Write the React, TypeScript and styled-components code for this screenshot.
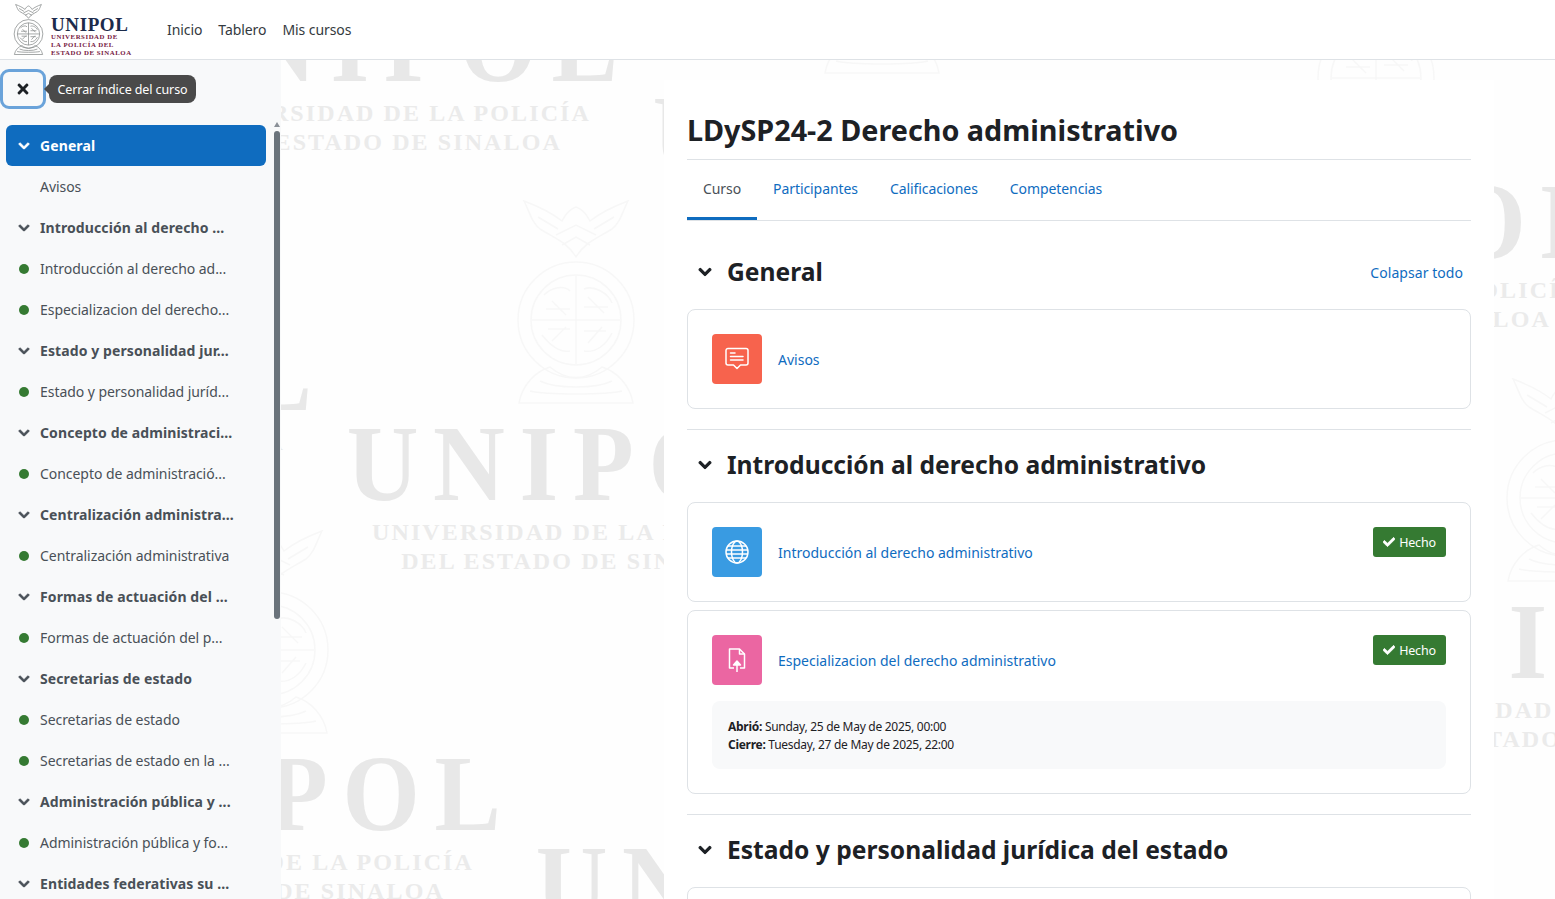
import React from "react";
import styled, { createGlobalStyle } from "styled-components";
import { FaCheck, FaChevronDown, FaTimes } from "react-icons/fa";

const GlobalStyle = createGlobalStyle`
  html, body {
    margin: 0;
    height: 100%;
    overflow: hidden;
    background: #fefefe;
  }
  body {
    font-family: "Noto Sans", "Open Sans", sans-serif;
    color: #1d2125;
  }
  * { box-sizing: border-box; }
`;

type IndexRow = { label: string; section?: boolean; done?: boolean; active?: boolean };

const indexRows: IndexRow[] = [
  { label: "General", section: true, active: true },
  { label: "Avisos" },
  { label: "Introducción al derecho ...", section: true },
  { label: "Introducción al derecho ad...", done: true },
  { label: "Especializacion del derecho...", done: true },
  { label: "Estado y personalidad jur...", section: true },
  { label: "Estado y personalidad juríd...", done: true },
  { label: "Concepto de administraci...", section: true },
  { label: "Concepto de administració...", done: true },
  { label: "Centralización administra...", section: true },
  { label: "Centralización administrativa", done: true },
  { label: "Formas de actuación del ...", section: true },
  { label: "Formas de actuación del p...", done: true },
  { label: "Secretarias de estado", section: true },
  { label: "Secretarias de estado", done: true },
  { label: "Secretarias de estado en la ...", done: true },
  { label: "Administración pública y ...", section: true },
  { label: "Administración pública y fo...", done: true },
  { label: "Entidades federativas su ...", section: true },
];

// where the repeated logo of the page background lands
const watermarks = [
  { x: 346, y: 428 },
  { x: 40, y: 758 },
  { x: 157, y: 9 },
  { x: -149, y: 338 },
  { x: 535, y: 848 },
  { x: 1146, y: 186 },
  { x: 1335, y: 606 },
  { x: 652, y: 98 },
];

const SealMark = ({ color, width, height, stroke }: { color: string; width: number; height: number; stroke: number }) => (
  <svg width={width} height={height} viewBox="0 0 120 210" fill="none" stroke={color} strokeWidth={stroke} style={{ display: "block" }}>
    <path d="M60 62C52 48 40 44 24 34C16 28 14 18 8 6C24 12 36 18 46 26C50 18 54 14 60 12C66 14 70 18 74 26C84 18 96 12 112 6C106 18 104 28 96 34C80 44 68 48 60 62Z" />
    <path d="M40 40L60 30L80 40M46 50L60 42L74 50M22 22L42 34M98 22L78 34" />
    <circle cx="60" cy="125" r="58" />
    <circle cx="60" cy="125" r="45" />
    <path d="M60 80V170M15 125H105" />
    <path d="M28 100C36 92 48 90 54 96M68 94C78 90 92 98 96 108M26 140C34 150 44 158 54 156M68 156C80 158 90 150 96 138M30 114H54M68 112H92M32 134H54M68 136H90M36 106L50 120M72 102L88 118M36 146L50 132M72 148L86 132" />
    <path d="M3 208C6 190 20 176 34 172C50 186 70 186 86 172C100 176 114 190 117 208Z" />
    <path d="M14 196C30 200 90 200 106 196M24 186C40 194 80 194 96 186" />
  </svg>
);

const ForumIcon = () => (
  <svg width="24" height="24" viewBox="0 0 24 24" fill="none" stroke="#fff" strokeWidth="1.5" strokeLinecap="round" strokeLinejoin="round">
    <path d="M3 1.5H21A2 2 0 0 1 23 3.500V16A2 2 0 0 1 21 18H15.500L12 21.500L8.500 18H3A2 2 0 0 1 1 16V3.500A2 2 0 0 1 3 1.500Z" />
    <path d="M5.500 6H10M5.500 9.500H18M5.500 13H18" />
  </svg>
);

const GlobeIcon = () => (
  <svg width="24" height="24" viewBox="0 0 24 24" fill="none" stroke="#fff" strokeWidth="1.500">
    <circle cx="12" cy="12" r="11" />
    <ellipse cx="12" cy="12" rx="5.500" ry="11" />
    <path d="M3 6H21M1.500 10H22.500M1.500 14H22.500M3 18H21" />
  </svg>
);

const UploadDocIcon = () => (
  <svg width="24" height="24" viewBox="0 0 24 24" fill="none" stroke="#fff" strokeWidth="1.500" strokeLinejoin="round">
    <path d="M9 20H4.500V1H14.500L19.500 6V20H15" />
    <path d="M14.500 1V6H19.500" />
    <path d="M12 24V14" />
    <path d="M8.500 17L12 13L15.500 17Z" fill="#fff" />
  </svg>
);

export default function App() {
  return (
    <Page>
      <GlobalStyle />
      <WatermarkLayer>
        {watermarks.map((w) => (
          <WatermarkLogo key={`${w.x}-${w.y}`} $x={w.x} $y={w.y}>
            <WatermarkSeal>
              <SealMark color="#f7f7f7" width={122} height={210} stroke={1.5} />
            </WatermarkSeal>
            <WatermarkName>UNIPOL</WatermarkName>
            <WatermarkLine>UNIVERSIDAD DE LA POLICÍA</WatermarkLine>
            <WatermarkLine>DEL ESTADO DE SINALOA</WatermarkLine>
          </WatermarkLogo>
        ))}
      </WatermarkLayer>

      <TopBar>
        <Brand>
          <SealMark color="#85898a" width={31} height={52} stroke={3} />
          <BrandText>
            <BrandName>UNIPOL</BrandName>
            <BrandLine>UNIVERSIDAD DE</BrandLine>
            <BrandLine>LA POLICÍA DEL</BrandLine>
            <BrandLine>ESTADO DE SINALOA</BrandLine>
          </BrandText>
        </Brand>
        <NavItem>Inicio</NavItem>
        <NavItem>Tablero</NavItem>
        <NavItem>Mis cursos</NavItem>
      </TopBar>

      <Body>
        <Sidebar>
          <SidebarTop>
            <CloseButton aria-label="Cerrar índice del curso">
              <FaTimes size={16} />
            </CloseButton>
            <Tooltip>Cerrar índice del curso</Tooltip>
          </SidebarTop>
          <CourseIndex>
            {indexRows.map((row, i) => (
              <IndexItem key={i} $section={row.section} $active={row.active}>
                <IndexSlot>
                  {row.section && <Chevron size={12} />}
                  {row.done && <DoneDot />}
                </IndexSlot>
                {row.label}
              </IndexItem>
            ))}
          </CourseIndex>
          <ScrollArrow />
          <ScrollThumb />
        </Sidebar>

        <Main>
          <Panel>
            <CourseTitle>LDySP24-2 Derecho administrativo</CourseTitle>
            <Tabs>
              <Tab $active>Curso</Tab>
              <Tab>Participantes</Tab>
              <Tab>Calificaciones</Tab>
              <Tab>Competencias</Tab>
            </Tabs>

            <Section $first>
              <SectionHead>
                <Chevron size={14} />
                <SectionTitle>General</SectionTitle>
                <CollapseAll>Colapsar todo</CollapseAll>
              </SectionHead>
              <Card>
                <ActivityRow>
                  <ActivityIcon $bg="#f7634d"><ForumIcon /></ActivityIcon>
                  <ActivityLink>Avisos</ActivityLink>
                </ActivityRow>
              </Card>
            </Section>

            <Section>
              <SectionHead>
                <Chevron size={14} />
                <SectionTitle>Introducción al derecho administrativo</SectionTitle>
              </SectionHead>
              <Card>
                <ActivityRow>
                  <ActivityIcon $bg="#399be2"><GlobeIcon /></ActivityIcon>
                  <ActivityLink>Introducción al derecho administrativo</ActivityLink>
                  <DoneBadge><DoneCheck size={12} />Hecho</DoneBadge>
                </ActivityRow>
              </Card>
              <Card>
                <ActivityRow>
                  <ActivityIcon $bg="#eb66a2"><UploadDocIcon /></ActivityIcon>
                  <ActivityLink>Especializacion del derecho administrativo</ActivityLink>
                  <DoneBadge><DoneCheck size={12} />Hecho</DoneBadge>
                </ActivityRow>
                <Dates>
                  <div><strong>Abrió:</strong> Sunday, 25 de May de 2025, 00:00</div>
                  <div><strong>Cierre:</strong> Tuesday, 27 de May de 2025, 22:00</div>
                </Dates>
              </Card>
            </Section>

            <Section>
              <SectionHead>
                <Chevron size={14} />
                <SectionTitle>Estado y personalidad jurídica del estado</SectionTitle>
              </SectionHead>
              <Card />
            </Section>
          </Panel>
        </Main>
      </Body>
    </Page>
  );
}

const Page = styled.div`
  position: relative;
  height: 899px;
  overflow: hidden;
`;

const WatermarkLayer = styled.div`
  position: absolute;
  inset: 0;
  overflow: hidden;
`;

const WatermarkLogo = styled.div<{ $x: number; $y: number }>`
  position: absolute;
  left: ${(p) => p.$x}px;
  top: ${(p) => p.$y}px;
  width: 460px;
  display: flex;
  flex-direction: column;
  align-items: center;
  font-family: "Liberation Serif", serif;
  font-weight: 700;
  white-space: nowrap;
`;

const WatermarkSeal = styled.div`
  position: absolute;
  left: 169px;
  top: -233px;
`;

const WatermarkName = styled.div`
  font-size: 108px;
  line-height: 72px;
  height: 72px;
  letter-spacing: 16px;
  margin-right: -16px;
  transform: scaleX(0.92);
  color: #e8e8e8;
`;

const WatermarkLine = styled.div`
  font-size: 24px;
  line-height: 29px;
  letter-spacing: 2.1px;
  color: #ebebeb;
  &:nth-child(3) { margin-top: 18px; }
`;

const TopBar = styled.header`
  position: relative;
  height: 60px;
  display: flex;
  align-items: center;
  padding-left: 13px;
  background: #fff;
  border-bottom: 1px solid #dee2e6;
`;

const Brand = styled.div`
  align-self: flex-start;
  display: flex;
  align-items: flex-start;
  gap: 7px;
  width: 146px;
  padding-top: 3px;
`;

const BrandText = styled.div`
  display: flex;
  flex-direction: column;
  font-family: "Liberation Serif", serif;
  font-weight: 700;
  white-space: nowrap;
  padding-top: 12.500px;
`;

const BrandName = styled.div`
  font-size: 19px;
  line-height: 18px;
  letter-spacing: 0.6px;
  margin-bottom: -1px;
  color: #1c2b4b;
`;

const BrandLine = styled.div`
  font-size: 6.8px;
  line-height: 8px;
  letter-spacing: 0.55px;
  color: #76203f;
`;

const NavItem = styled.a`
  font-size: 14px;
  letter-spacing: -0.08px;
  padding: 0 8px;
  color: #343a40;
`;

const Body = styled.div`
  position: relative;
  display: flex;
  height: 839px;
`;

const Sidebar = styled.aside`
  position: relative;
  flex: 0 0 281px;
  background: #f8f9fa;
`;

const SidebarTop = styled.div`
  height: 65px;
  padding-top: 9px;
`;

const CloseButton = styled.button`
  width: 46px;
  height: 40px;
  display: flex;
  align-items: center;
  justify-content: center;
  padding: 0;
  background: #f8f9fa;
  color: #1d2125;
  border: 3px solid #6aa3da;
  border-radius: 9px;
`;

const Tooltip = styled.div`
  position: absolute;
  left: 49px;
  top: 15px;
  height: 28px;
  width: 147px;
  display: flex;
  align-items: center;
  justify-content: center;
  font-size: 12.500px;
  letter-spacing: -0.1px;
  color: #fff;
  background: #4a4a4a;
  border-radius: 8px;
  white-space: nowrap;
  &::before {
    content: "";
    position: absolute;
    left: -5px;
    top: 9px;
    border-style: solid;
    border-width: 5px 5px 5px 0;
    border-color: transparent #4a4a4a transparent transparent;
  }
`;

const CourseIndex = styled.nav`
  padding: 0 15px 0 6px;
`;

const IndexItem = styled.div<{ $section?: boolean; $active?: boolean }>`
  height: 41px;
  display: flex;
  align-items: center;
  padding-left: 12px;
  font-size: 14px;
  letter-spacing: ${(p) => (p.$section ? "0.1px" : "-0.05px")};
  white-space: nowrap;
  font-weight: ${(p) => (p.$section ? 700 : 400)};
  color: ${(p) => (p.$active ? "#fff" : "#495057")};
  background: ${(p) => (p.$active ? "#0f6cbf" : "transparent")};
  border-radius: 6px;
`;

const IndexSlot = styled.span`
  flex: 0 0 22px;
  display: flex;
  align-items: center;
`;

const Chevron = styled(FaChevronDown)`
  stroke: currentColor;
  stroke-width: 40px;
`;

const DoneDot = styled.span`
  width: 10px;
  height: 10px;
  margin-left: 1px;
  border-radius: 50%;
  background: #357a32;
`;

const ScrollThumb = styled.div`
  position: absolute;
  left: 274px;
  top: 71px;
  width: 6px;
  height: 488px;
  border-radius: 3px;
  background: #6a737b;
`;

const ScrollArrow = styled.div`
  position: absolute;
  left: 274px;
  top: 62px;
  border-style: solid;
  border-width: 0 3px 5px 3px;
  border-color: transparent transparent #8a9097 transparent;
`;

const Main = styled.main`
  flex: 1;
  padding-left: 383px;
  position: relative;
`;

const Panel = styled.div`
  width: 830px;
  height: 100%;
  margin-top: 20px;
  padding: 32px 23px 0;
  background: #fff;
`;

const CourseTitle = styled.h1`
  margin: 0;
  font-size: 28.750px;
  line-height: 36px;
  font-weight: 700;
  padding-bottom: 11px;
  border-bottom: 1px solid #dee2e6;
`;

const Tabs = styled.div`
  display: flex;
  border-bottom: 1px solid #dee2e6;
`;

const Tab = styled.a<{ $active?: boolean }>`
  height: 60px;
  display: flex;
  align-items: center;
  padding: 0 16px;
  font-size: 14px;
  letter-spacing: -0.08px;
  color: ${(p) => (p.$active ? "#495057" : "#0f6cbf")};
  border-bottom: 3px solid ${(p) => (p.$active ? "#0f6cbf" : "transparent")};
`;

const Section = styled.section<{ $first?: boolean }>`
  padding-top: ${(p) => (p.$first ? "33px" : "17px")};
  padding-bottom: 20px;
  border-bottom: 1px solid #dee2e6;
`;

const SectionHead = styled.div`
  height: 36px;
  display: flex;
  align-items: center;
  padding: 0 8px 0 11px;
  margin-bottom: 19px;
`;

const SectionTitle = styled.h2`
  margin: 0 0 0 15px;
  font-size: 24.600px;
  line-height: 36px;
  font-weight: 700;
`;

const CollapseAll = styled.a`
  margin-left: auto;
  font-size: 14px;
  letter-spacing: 0.05px;
  color: #0f6cbf;
`;

const Card = styled.div`
  min-height: 100px;
  padding: 24px;
  border: 1px solid #dee2e6;
  border-radius: 8px;
  background: #fff;
  & + & { margin-top: 8px; }
`;

const ActivityRow = styled.div`
  display: flex;
  align-items: flex-start;
  gap: 16px;
`;

const ActivityIcon = styled.div<{ $bg: string }>`
  flex: 0 0 50px;
  height: 50px;
  display: flex;
  align-items: center;
  justify-content: center;
  border-radius: 4px;
  background: ${(p) => p.$bg};
`;

const ActivityLink = styled.a`
  align-self: center;
  font-size: 14px;
  color: #0f6cbf;
`;

const DoneBadge = styled.div`
  margin-left: auto;
  height: 30px;
  width: 73px;
  display: flex;
  align-items: center;
  justify-content: center;
  gap: 4px;
  font-size: 12.500px;
  letter-spacing: -0.2px;
  color: #fff;
  background: #357a32;
  border-radius: 3px;
`;

const DoneCheck = styled(FaCheck)`
  stroke: currentColor;
  stroke-width: 30px;
`;

const Dates = styled.div`
  margin-top: 16px;
  height: 68px;
  padding: 17px 16px;
  font-size: 12px;
  line-height: 18px;
  letter-spacing: -0.28px;
  color: #1d2125;
  background: #f8f9fa;
  border-radius: 8px;
`;
